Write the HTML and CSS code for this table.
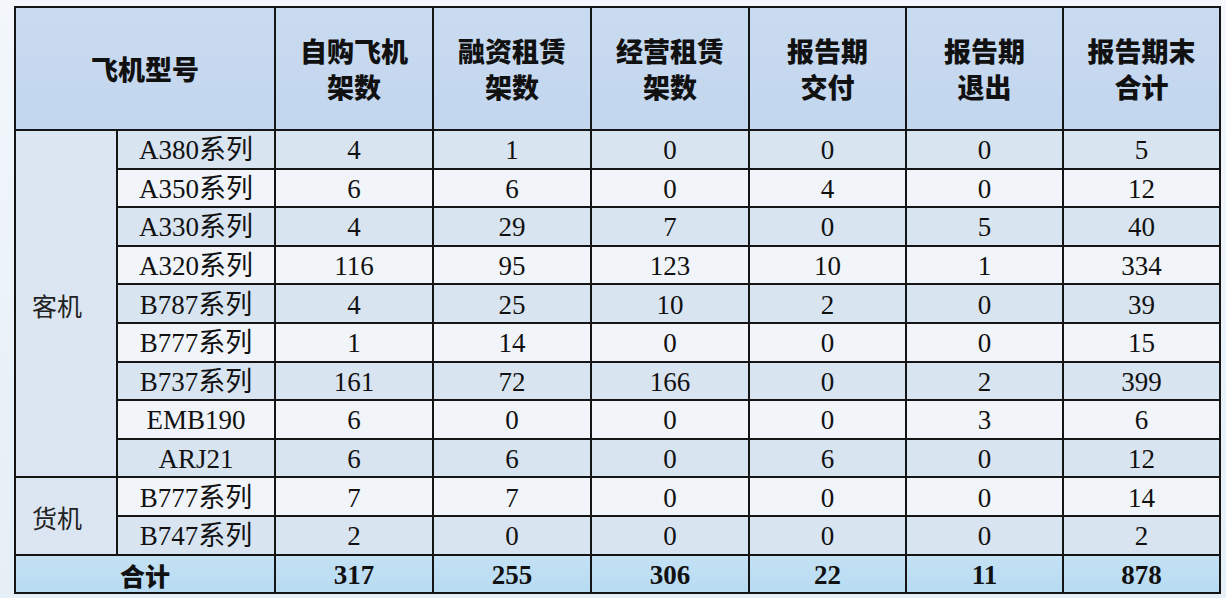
FILE: index.html
```html
<!DOCTYPE html>
<html lang="zh-CN">
<head>
<meta charset="utf-8">
<title>飞机型号</title>
<link rel="stylesheet" href="styles.css">
</head>
<body>
<div class="page">
<table class="fleet">
  <colgroup>
    <col class="c-cat"><col class="c-model">
    <col class="c-num"><col class="c-num"><col class="c-num">
    <col class="c-num2"><col class="c-num2"><col class="c-num2">
  </colgroup>
  <thead>
    <tr class="head">
      <th colspan="2">飞机型号</th>
      <th>自购飞机<br>架数</th>
      <th>融资租赁<br>架数</th>
      <th>经营租赁<br>架数</th>
      <th>报告期<br>交付</th>
      <th>报告期<br>退出</th>
      <th>报告期末<br>合计</th>
    </tr>
  </thead>
  <tbody>
    <tr class="odd"><td class="cat" rowspan="9">客机</td><td class="model">A380系列</td><td>4</td><td>1</td><td>0</td><td>0</td><td>0</td><td>5</td></tr>
    <tr class="even"><td class="model">A350系列</td><td>6</td><td>6</td><td>0</td><td>4</td><td>0</td><td>12</td></tr>
    <tr class="odd"><td class="model">A330系列</td><td>4</td><td>29</td><td>7</td><td>0</td><td>5</td><td>40</td></tr>
    <tr class="even"><td class="model">A320系列</td><td>116</td><td>95</td><td>123</td><td>10</td><td>1</td><td>334</td></tr>
    <tr class="odd"><td class="model">B787系列</td><td>4</td><td>25</td><td>10</td><td>2</td><td>0</td><td>39</td></tr>
    <tr class="even"><td class="model">B777系列</td><td>1</td><td>14</td><td>0</td><td>0</td><td>0</td><td>15</td></tr>
    <tr class="odd"><td class="model">B737系列</td><td>161</td><td>72</td><td>166</td><td>0</td><td>2</td><td>399</td></tr>
    <tr class="even"><td class="model">EMB190</td><td>6</td><td>0</td><td>0</td><td>0</td><td>3</td><td>6</td></tr>
    <tr class="odd"><td class="model">ARJ21</td><td>6</td><td>6</td><td>0</td><td>6</td><td>0</td><td>12</td></tr>
    <tr class="even"><td class="cat" rowspan="2">货机</td><td class="model">B777系列</td><td>7</td><td>7</td><td>0</td><td>0</td><td>0</td><td>14</td></tr>
    <tr class="odd"><td class="model">B747系列</td><td>2</td><td>0</td><td>0</td><td>0</td><td>0</td><td>2</td></tr>
    <tr class="total"><td class="total-label" colspan="2">合计</td><td>317</td><td>255</td><td>306</td><td>22</td><td>11</td><td>878</td></tr>
  </tbody>
</table>
</div>
</body>
</html>
```
FILE: styles.css
```css
html, body {
  margin: 0;
  padding: 0;
}
body {
  width: 1226px;
  height: 598px;
  overflow: hidden;
  background: linear-gradient(180deg, #f3f7fb 0%, #eaf2f9 60%, #e6eef6 100%);
}
.page {
  padding: 6px 0 0 14px;
}
.fleet {
  border-collapse: collapse;
  table-layout: fixed;
  width: 1207px;
  font-family: "Liberation Serif", "Noto Sans CJK SC", serif;
  font-size: 27px;
  color: #111;
}
.c-cat { width: 102px; }
.c-model { width: 158px; }
.c-num { width: 158px; }
.c-num2 { width: 157px; }
.fleet th,
.fleet td {
  border: 2px solid #151515;
  text-align: center;
  vertical-align: middle;
  padding: 0;
}
.head th {
  height: 121px;
  background: linear-gradient(180deg, #c9dbf0 0%, #c2d6ee 100%);
  font-family: "Noto Sans CJK SC", sans-serif;
  font-weight: 900;
  font-size: 27px;
  line-height: 36px;
  color: #111;
}
.fleet td {
  height: 34.6px;
  line-height: 22px;
  padding-top: 2px;
}
.odd td {
  background: #d9e4f1;
}
.even td {
  background: #f1f5fa;
}
.fleet td.cat {
  background: #dce6f2;
  font-family: "Noto Sans CJK SC", sans-serif;
  font-size: 25px;
  color: #222;
  padding-right: 18px;
}
.model {
  font-family: "Liberation Serif", "Noto Sans CJK SC", serif;
}
.total td {
  background: linear-gradient(180deg, #c4e1f4 0%, #b8dbf2 100%);
  font-weight: 700;
}
.total td.total-label {
  font-family: "Noto Sans CJK SC", sans-serif;
  font-weight: 900;
  font-size: 25px;
}
```
